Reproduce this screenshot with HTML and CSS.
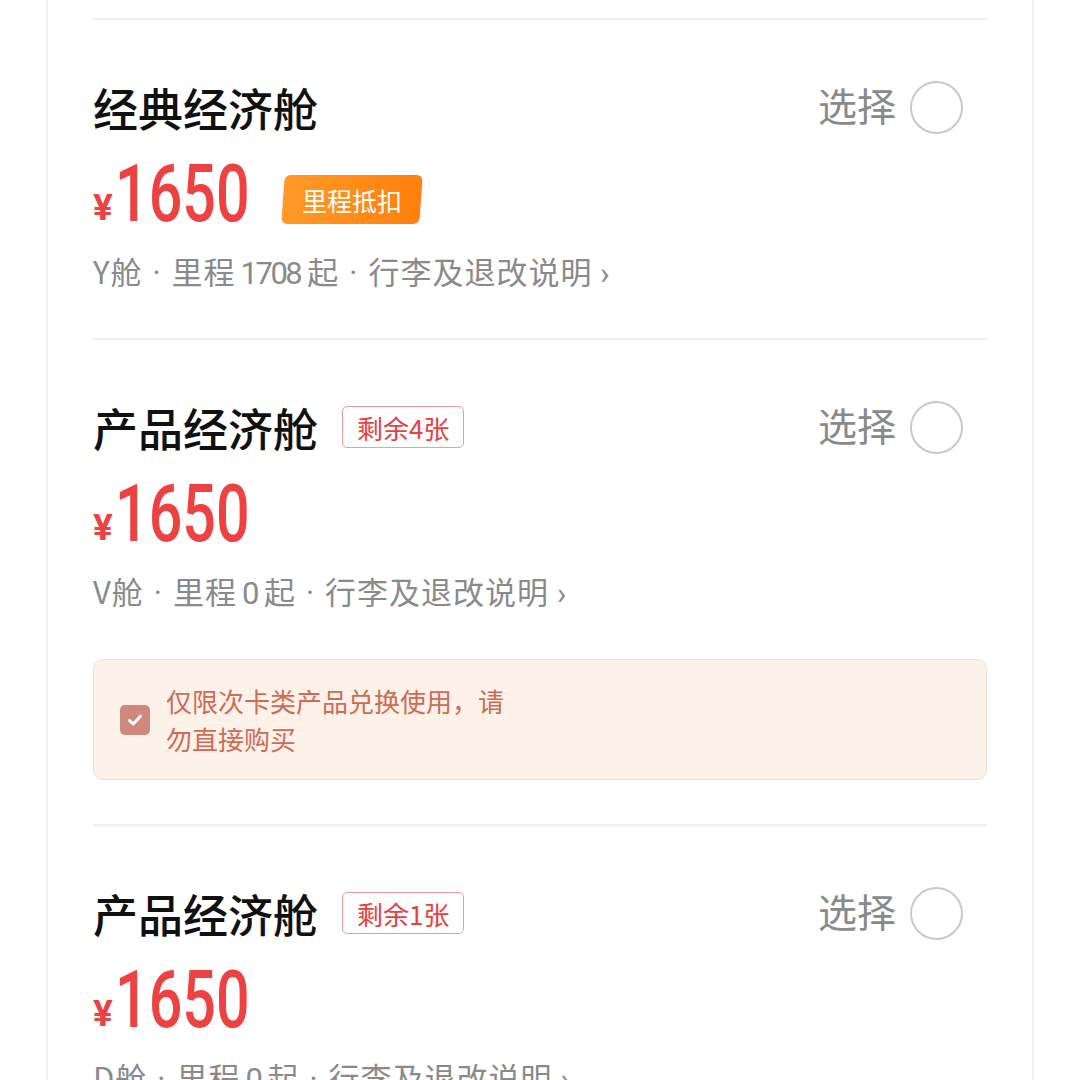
FILE: index.html
```html
<!DOCTYPE html>
<html lang="zh-CN">
<head>
    <meta charset="UTF-8">
    <meta name="viewport" content="width=device-width, initial-scale=1.0">
    <title>选择舱位</title>
    <link rel="stylesheet" href="styles.css">
</head>
<body>

    <div class="cabin-list">

        <div class="cabin">
            <div class="cabin-head">
                <div class="cabin-name">经典经济舱</div>
                <div class="pick">选择 <span class="radio"></span></div>
            </div>
            <div class="cabin-price">
                <span class="yen">¥</span><span class="amount">1650</span>
                <span class="tag-mile"><span>里程抵扣</span></span>
            </div>
            <div class="cabin-info">Y舱<span class="dot">·</span>里程<span class="num">1708</span>起<span class="dot">·</span>行李及退改说明 <span class="arrow">›</span></div>
        </div>

        <div class="cabin">
            <div class="cabin-head">
                <div class="cabin-name">产品经济舱 <span class="tag-left">剩余4张</span></div>
                <div class="pick">选择 <span class="radio"></span></div>
            </div>
            <div class="cabin-price">
                <span class="yen">¥</span><span class="amount">1650</span>
            </div>
            <div class="cabin-info">V舱<span class="dot">·</span>里程<span class="num">0</span>起<span class="dot">·</span>行李及退改说明 <span class="arrow">›</span></div>
            <div class="notice">
                <span class="check">
                    <svg width="18" height="18" viewBox="0 0 18 18"><path d="M3.5 9.5 L7.2 13 L14.5 5.2" fill="none" stroke="#fff" stroke-width="3" stroke-linecap="round" stroke-linejoin="round"/></svg>
                </span>
                <div class="notice-text">仅限次卡类产品兑换使用，请勿直接购买</div>
            </div>
        </div>

        <div class="cabin">
            <div class="cabin-head">
                <div class="cabin-name">产品经济舱 <span class="tag-left">剩余1张</span></div>
                <div class="pick">选择 <span class="radio"></span></div>
            </div>
            <div class="cabin-price">
                <span class="yen">¥</span><span class="amount">1650</span>
            </div>
            <div class="cabin-info">D舱<span class="dot">·</span>里程<span class="num">0</span>起<span class="dot">·</span>行李及退改说明 <span class="arrow">›</span></div>
        </div>

    </div>

</body>
</html>
```

FILE: styles.css
```css
body {
    margin: 0;
    background: #fff;
    font-family: "Noto Sans CJK SC", "Noto Sans", sans-serif;
    overflow: hidden;
}
.cabin-list {
    margin: 0 46px;
    padding: 18px 45px 0;
    border-left: 2px solid #efefef;
    border-right: 2px solid #efefef;
    min-height: 1200px;
}
.cabin {
    border-top: 2px solid #efefef;
    padding: 59px 0 47px;
}
.cabin-head {
    display: flex;
    align-items: center;
    justify-content: space-between;
    height: 56px;
}
.cabin-name {
    display: flex;
    align-items: center;
    gap: 24px;
    font-size: 45px;
    font-weight: 500;
    color: #111;
}
.tag-left {
    display: inline-flex;
    align-items: center;
    height: 40px;
    padding: 0 14px;
    border: 1.5px solid #f29b9b;
    border-radius: 5px;
    color: #e8403f;
    font-size: 26px;
    font-weight: 400;
}
.pick {
    display: flex;
    align-items: center;
    gap: 14px;
    margin-right: 24px;
    font-size: 39px;
    line-height: 48px;
    color: #8a8a8a;
    position: relative;
    top: -3px;
}
.radio {
    width: 49px;
    height: 49px;
    border: 2px solid #c9c9c9;
    border-radius: 50%;
    position: relative;
    top: 3px;
}
.cabin-price {
    display: flex;
    align-items: center;
    height: 90px;
    margin-top: 14px;
    color: #ec4242;
}
.yen {
    font-family: Roboto, sans-serif;
    font-size: 37px;
    font-weight: 700;
    margin-top: 26px;
    margin-right: 2px;
}
.amount {
    display: inline-block;
    width: 134px;
    font-family: Roboto, sans-serif;
    font-size: 80px;
    font-weight: 500;
    line-height: 90px;
    transform: scaleX(0.74);
    transform-origin: left center;
    white-space: nowrap;
}
.tag-mile {
    display: inline-flex;
    align-items: center;
    justify-content: center;
    width: 138px;
    height: 49px;
    margin-left: 34px;
    margin-top: 10px;
    border-radius: 6px;
    background: linear-gradient(90deg, #ff9a26, #ff800e);
    transform: skewX(-4deg);
}
.tag-mile span {
    transform: skewX(4deg);
    color: #fff;
    font-size: 25px;
}
.cabin-info {
    height: 40px;
    line-height: 40px;
    margin-top: 12px;
    font-size: 31px;
    letter-spacing: 1px;
    color: #8a8a8a;
}
.cabin-info .dot {
    font-family: Roboto, sans-serif;
    padding: 0 10px;
}
.cabin-info .num {
    font-family: Roboto, sans-serif;
    letter-spacing: -2.5px;
    padding: 0 7px 0 5px;
}
.cabin-info .arrow {
    font-family: Roboto, sans-serif;
}
.notice {
    display: flex;
    align-items: center;
    gap: 16px;
    height: 119px;
    margin: 48px 0 -3px;
    padding: 0 26px;
    background: #fdf2ea;
    border: 1px solid #f6dfd2;
    border-radius: 10px;
}
.check {
    display: flex;
    align-items: center;
    justify-content: center;
    width: 30px;
    height: 30px;
    border-radius: 5px;
    background: #d0887c;
}
.notice-text {
    width: 350px;
    font-size: 26px;
    line-height: 38px;
    color: #cf6b55;
}
```
